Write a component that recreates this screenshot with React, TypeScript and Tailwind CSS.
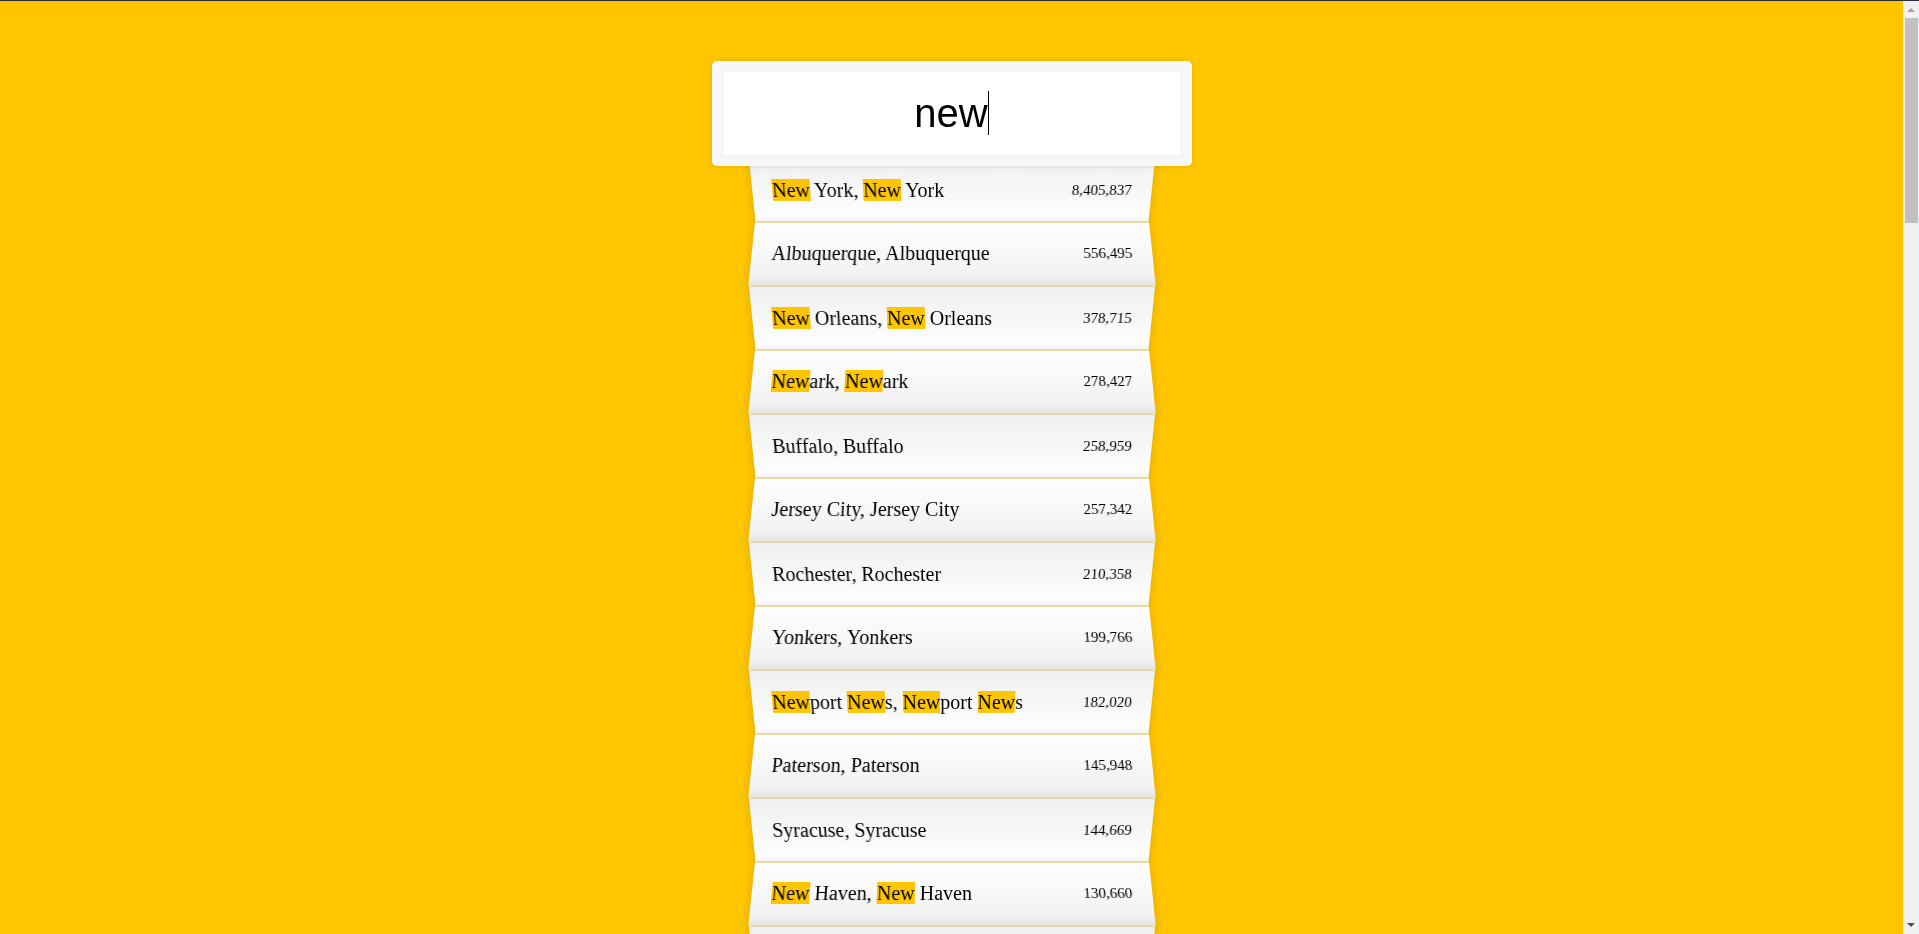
const cities: [string, string][] = [
  ["New York", "8,405,837"],
  ["Albuquerque", "556,495"],
  ["New Orleans", "378,715"],
  ["Newark", "278,427"],
  ["Buffalo", "258,959"],
  ["Jersey City", "257,342"],
  ["Rochester", "210,358"],
  ["Yonkers", "199,766"],
  ["Newport News", "182,020"],
  ["Paterson", "145,948"],
  ["Syracuse", "144,669"],
  ["New Haven", "130,660"],
  ["Elizabeth", "127,558"],
];

const query = "new";

function Highlight({ text }: { text: string }) {
  const parts = text.split(new RegExp(`(${query})`, "gi"));
  return (
    <>
      {parts.map((p, i) =>
        p.toLowerCase() === query ? (
          <span key={i} className="bg-[#ffc600]">
            {p}
          </span>
        ) : (
          <span key={i}>{p}</span>
        )
      )}
    </>
  );
}

// browser scrollbar as seen in the shot
function Scrollbar() {
  return (
    <div className="w-4 shrink-0 bg-[#f1f1f1] flex flex-col">
      <div className="h-[17px] flex items-center justify-center">
        <svg width="8" height="5" viewBox="0 0 8 5">
          <path d="M0 5 L4 1 L8 5 Z" fill="#a3a3a3" />
        </svg>
      </div>
      <div className="h-[205px] ml-[2px] mr-px bg-[#c1c1c1]" />
      <div className="flex-1" />
      <div className="h-[17px] flex items-center justify-center pb-px">
        <svg width="8" height="5" viewBox="0 0 8 5">
          <path d="M0 0 L8 0 L4 4 Z" fill="#505050" />
        </svg>
      </div>
    </div>
  );
}

export default function App() {
  return (
    <div className="flex h-screen overflow-hidden bg-[#ffc600] border-t border-[#2b2f38] font-['Liberation_Serif',serif] text-[20px] text-black">
      <main className="flex-1 overflow-hidden">
        <form className="max-w-[400px] mx-auto my-[50px]" onSubmit={(e) => e.preventDefault()}>
          <div className="relative top-[10px] -left-[10%] z-[2] w-[120%] rounded-[5px] border-[10px] border-[#f7f7f7] bg-white p-5 text-center text-[40px] leading-[45px] font-['Liberation_Sans',Arial,sans-serif] shadow-[0_0_5px_rgba(0,0,0,0.12),inset_0_0_2px_rgba(0,0,0,0.19)]">
            new<span className="inline-block w-px h-[44px] bg-black align-top" />
          </div>
          <ul className="relative m-0 p-0">
            {cities.map(([city, pop], i) => (
              <li
                key={i}
                className="flex justify-between p-5 leading-[23px] capitalize border-b border-[#d8d8d8] shadow-[0_0_10px_rgba(0,0,0,0.14)] from-white to-[#efefef] odd:bg-linear-to-t odd:[transform:perspective(100px)_rotateX(-3deg)_translateY(3px)] even:bg-linear-to-b even:[transform:perspective(100px)_rotateX(3deg)_translateY(2px)_scale(1.001)]"
              >
                <span>
                  <Highlight text={`${city}, ${city}`} />
                </span>
                <span className="text-[15px]">{pop}</span>
              </li>
            ))}
          </ul>
        </form>
      </main>
      <Scrollbar />
    </div>
  );
}
